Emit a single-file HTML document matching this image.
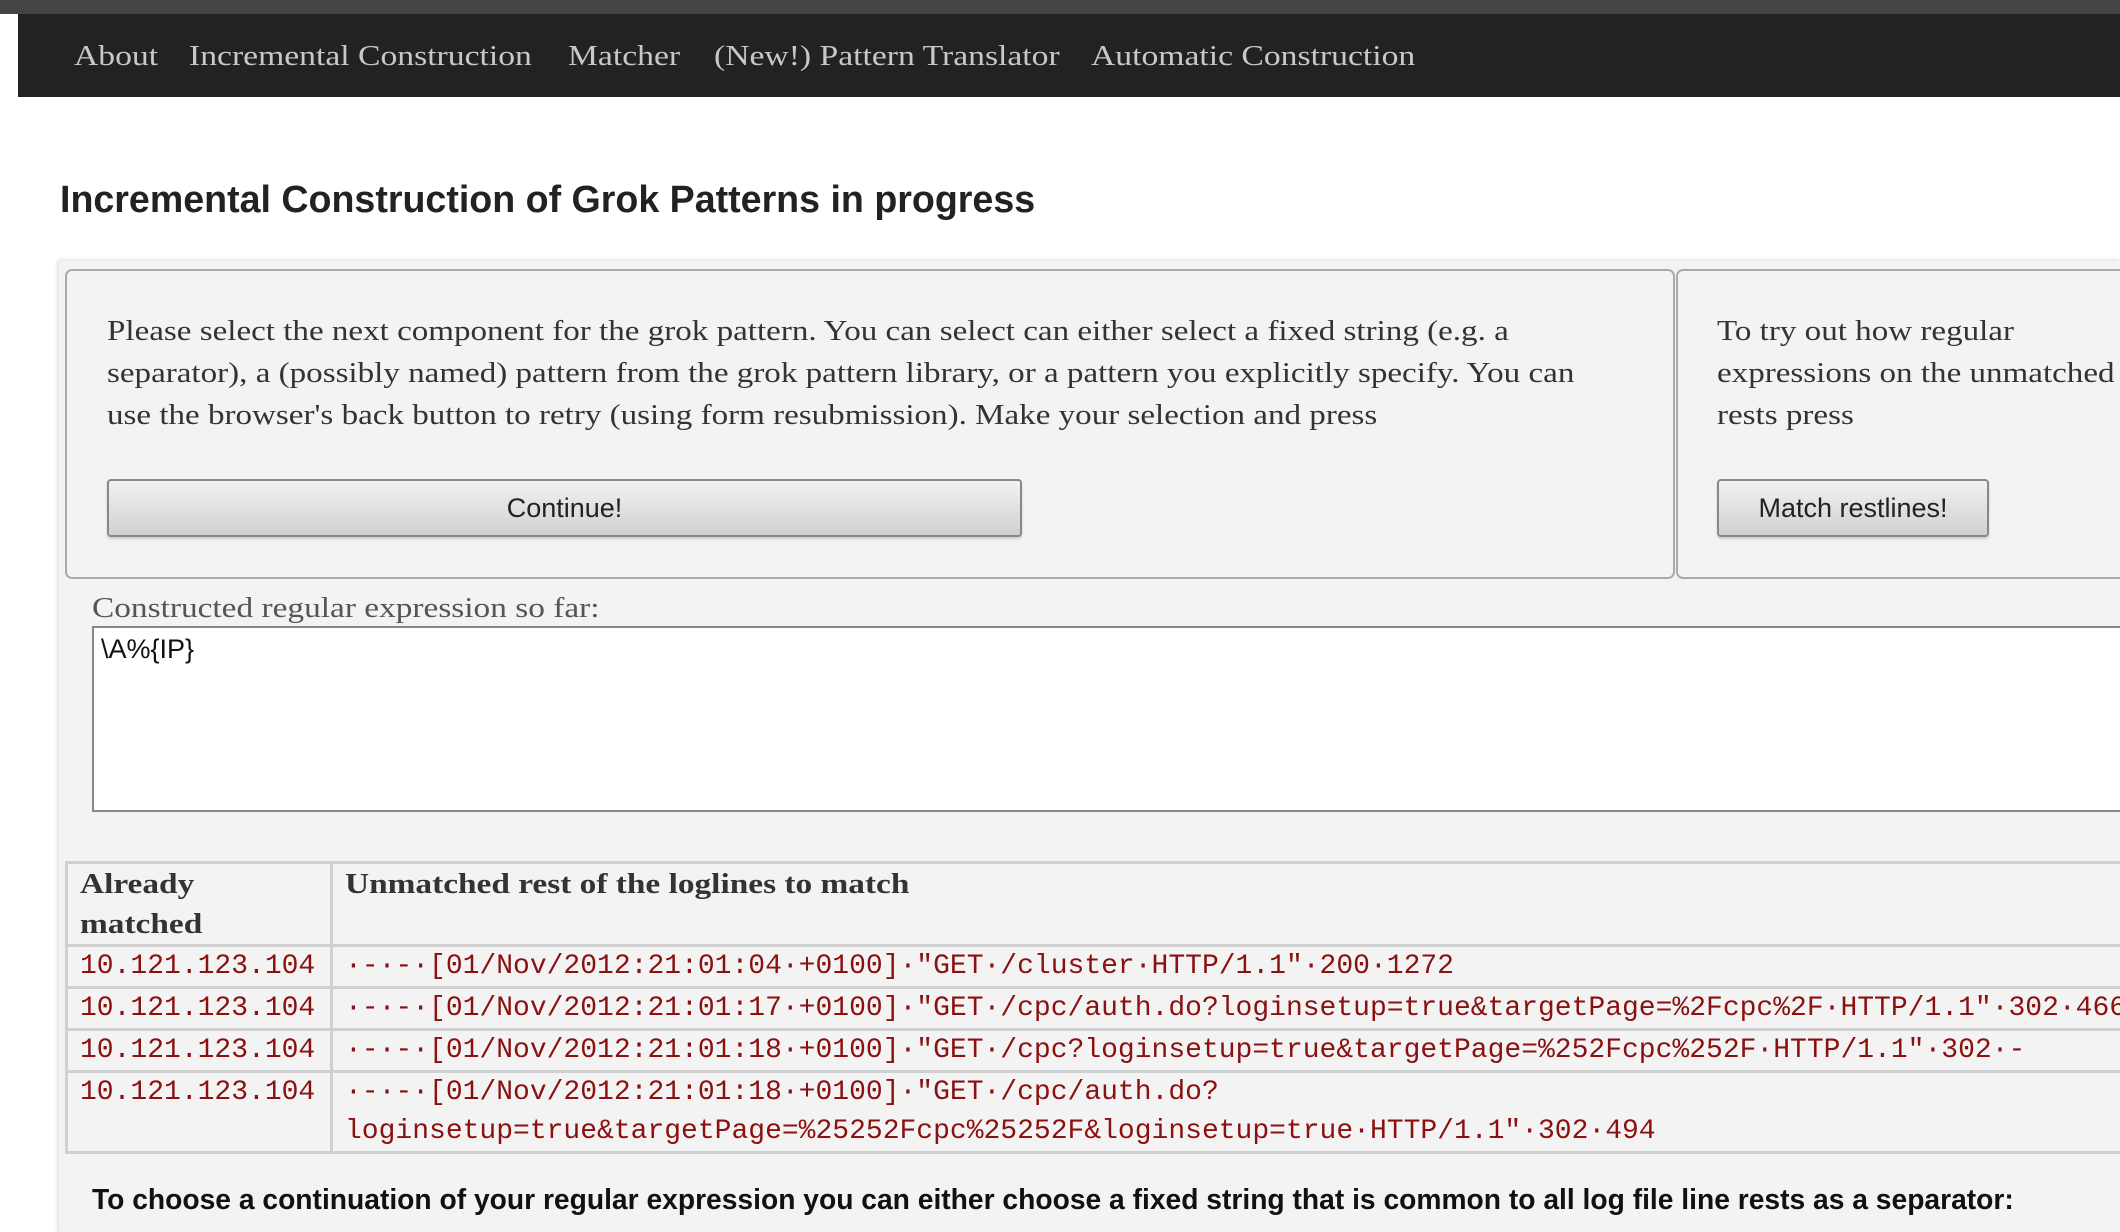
<!DOCTYPE html>
<html><head><meta charset="utf-8"><style>
*{margin:0;padding:0;box-sizing:border-box}
body{width:2120px;height:1232px;overflow:hidden;background:#fff;position:relative;font-family:"Liberation Serif",serif;color:#333}
.top{position:absolute;left:0;top:0;width:2120px;height:14px;background:#444}
.nav{position:absolute;left:18px;top:14px;width:2102px;height:83px;background:#222}
.nav span{position:absolute;top:26px;font-size:29px;color:#c8c8c8;white-space:nowrap;transform:scaleX(1.16);transform-origin:left}
h1{position:absolute;left:60px;top:178px;font-family:"Liberation Sans",sans-serif;font-size:37.6px;font-weight:bold;color:#222;white-space:nowrap}
.wrap{position:absolute;left:59px;top:261px;width:2061px;height:971px;background:#f3f3f3;box-shadow:-2px 0 3px #e4e4e4, 0 -2px 3px #eaeaea}
.box{position:absolute;top:269px;height:310px;background:#f3f3f3;border:2px solid #aaa;border-radius:7px}
.p{position:absolute;font-size:29px;line-height:42px;color:#333;white-space:nowrap;transform:scaleX(1.14);transform-origin:left}
.btn{position:absolute;top:479px;height:58px;border:2px solid #888;border-radius:4px;background:linear-gradient(#f2f2f2,#d0d0d0);font-family:"Liberation Sans",sans-serif;font-size:27px;color:#222;text-align:center;line-height:54px;box-shadow:0 2px 2px #ccc}
.lbl{position:absolute;left:92px;top:592px;font-size:29px;color:#555;white-space:nowrap;transform:scaleX(1.15);transform-origin:left}
.ta{position:absolute;left:92px;top:626px;width:2040px;height:186px;background:#fff;border:2px solid #888}
.ta div{position:absolute;left:7px;top:6px;font-family:"Liberation Sans",sans-serif;font-size:27px;color:#111}
table{position:absolute;left:65px;top:861px;border-collapse:collapse;width:2080px}
td,th{border:3px solid #d0d0d0;vertical-align:top;text-align:left;padding:0 12px}
th{font-size:29px;line-height:40px;color:#333;font-weight:bold;padding-top:0}
th span{display:inline-block;transform:scaleX(1.15);transform-origin:left}
td{font-family:"Liberation Mono",monospace;font-size:28px;color:#8b1010;line-height:39px;white-space:nowrap}
.bot{position:absolute;left:92px;top:1184px;font-family:"Liberation Sans",sans-serif;font-weight:bold;font-size:29px;color:#111;white-space:nowrap;transform:scaleX(0.973);transform-origin:left}
</style></head><body>
<div class="top"></div>
<div class="nav">
<span style="left:56px">About</span>
<span style="left:171px">Incremental Construction</span>
<span style="left:550px">Matcher</span>
<span style="left:696px">(New!) Pattern Translator</span>
<span style="left:1073px">Automatic Construction</span>
</div>
<h1>Incremental Construction of Grok Patterns in progress</h1>
<div class="wrap"></div>
<div class="box" style="left:65px;width:1610px"></div>
<div class="box" style="left:1676px;width:460px"></div>
<div class="p" style="left:107px;top:310px">Please select the next component for the grok pattern. You can select can either select a fixed string (e.g. a<br>separator), a (possibly named) pattern from the grok pattern library, or a pattern you explicitly specify. You can<br>use the browser's back button to retry (using form resubmission). Make your selection and press</div>
<div class="p" style="left:1717px;top:310px">To try out how regular<br>expressions on the unmatched<br>rests press</div>
<div class="btn" style="left:107px;width:915px">Continue!</div>
<div class="btn" style="left:1717px;width:272px">Match restlines!</div>
<div class="lbl">Constructed regular expression so far:</div>
<div class="ta"><div>\A%{IP}</div></div>
<table>
<tr style="height:83px"><th style="width:265px"><span>Already<br>matched</span></th><th><span>Unmatched rest of the loglines to match</span></th></tr>
<tr style="height:42px"><td>10.121.123.104</td><td>·-·-·[01/Nov/2012:21:01:04·+0100]·"GET·/cluster·HTTP/1.1"·200·1272</td></tr>
<tr style="height:42px"><td>10.121.123.104</td><td>·-·-·[01/Nov/2012:21:01:17·+0100]·"GET·/cpc/auth.do?loginsetup=true&amp;targetPage=%2Fcpc%2F·HTTP/1.1"·302·466</td></tr>
<tr style="height:42px"><td>10.121.123.104</td><td>·-·-·[01/Nov/2012:21:01:18·+0100]·"GET·/cpc?loginsetup=true&amp;targetPage=%252Fcpc%252F·HTTP/1.1"·302·-</td></tr>
<tr style="height:81px"><td>10.121.123.104</td><td>·-·-·[01/Nov/2012:21:01:18·+0100]·"GET·/cpc/auth.do?<br>loginsetup=true&amp;targetPage=%25252Fcpc%25252F&amp;loginsetup=true·HTTP/1.1"·302·494</td></tr>
</table>
<div class="bot">To choose a continuation of your regular expression you can either choose a fixed string that is common to all log file line rests as a separator:</div>
</body></html>
